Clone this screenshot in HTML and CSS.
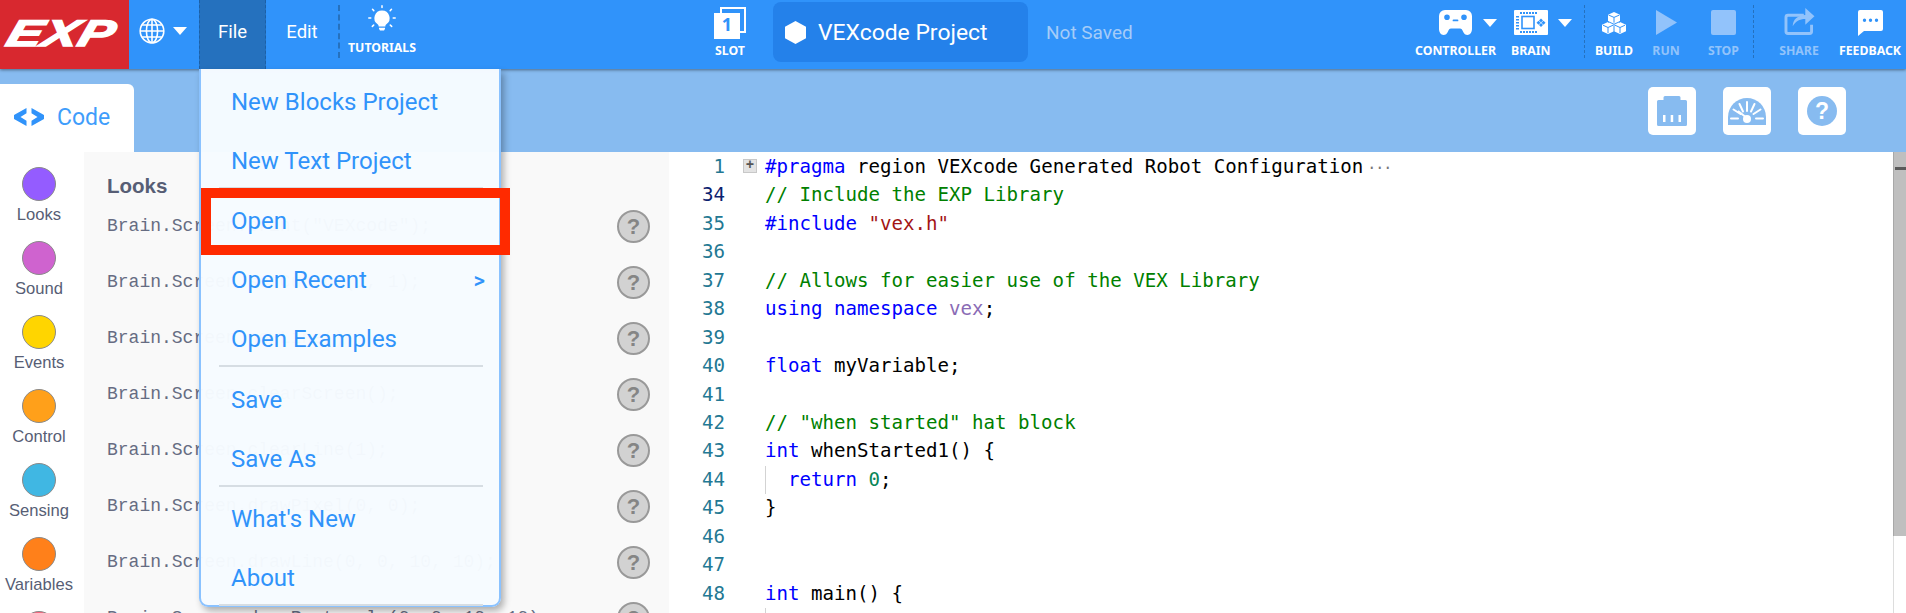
FILE: index.html
```html
<!DOCTYPE html>
<html lang="en">
<head>
<meta charset="utf-8">
<title>VEXcode EXP</title>
<link rel="stylesheet" href="styles.css">
</head>
<body>
<div class="app">
  <header class="topbar">
    <div class="logo"><span class="logo-text">EXP</span></div>
    <div class="globe">
      <svg class="globe-icon" viewBox="0 0 26 26"><g fill="none" stroke="#fff" stroke-width="1.6"><circle cx="13" cy="13" r="11.8"/><ellipse cx="13" cy="13" rx="5.6" ry="11.8"/><path d="M13 1v24M1.5 13h23M3.2 7h19.6M3.2 19h19.6"/></g></svg>
      <svg class="caret" viewBox="0 0 14 8"><path d="M0 0h14L7 8z" fill="#fff"/></svg>
    </div>
    <div class="nav nav-file">File</div>
    <div class="nav nav-edit">Edit</div>
    <div class="vr"></div>
    <div class="tutorials">
      <svg class="bulb" viewBox="0 0 28 28"><g fill="#fff"><path d="M14 5.500a7.600 7.600 0 0 0-4.400 13.800c.9.700 1 1.400 1 2.200h6.800c0-.8.100-1.500 1-2.200A7.600 7.600 0 0 0 14 5.500z"/><path d="M11 22.700h6v1.100l-1 1.600h-4l-1-1.600z"/></g><g stroke="#fff" stroke-width="1.500" stroke-linecap="round"><path d="M14 .8v1.700M4.500 4.300l1.300 1.300M23.500 4.300l-1.300 1.300M.8 13h2M25.200 13h2M4.300 21.400l1.400-1.300M23.700 21.400l-1.400-1.300"/></g></svg>
      <span class="tool-label">TUTORIALS</span>
    </div>
    <div class="tool slot">
      <div class="slot-icon"><span class="slot-back"></span><span class="slot-front">1</span></div>
      <span class="tool-label">SLOT</span>
    </div>
    <div class="project">
      <svg class="hex" viewBox="0 0 21 23"><path d="M10.500 0l10.500 5.750v11.500L10.500 23 0 17.250V5.750z" fill="#fff"/></svg>
      <span class="project-name">VEXcode Project</span>
    </div>
    <div class="saved">Not Saved</div>
    <div class="tools">
      <div class="tool tool-controller">
        <div class="tool-row">
          <svg class="ic ic-controller" viewBox="0 0 33 25"><path fill="#fff" fill-rule="evenodd" d="M6 0h21a6 6 0 0 1 6 6v13c0 3-2 6-4.500 6-2 0-3.500-1-4.500-3.500-.8-2-1.500-3-3-3H12c-1.500 0-2.200 1-3 3C8 24 6.500 25 4.500 25 2 25 0 22 0 19V6a6 6 0 0 1 6-6zM8 4.500a2.800 2.800 0 1 0 0 5.600 2.800 2.800 0 0 0 0-5.600zm17 0a2.800 2.800 0 1 0 0 5.600 2.800 2.800 0 0 0 0-5.600zM14.500 9.500a.8.8 0 0 0 0 1.800h4a.8.8 0 0 0 0-1.800z"/></svg>
          <svg class="caret" viewBox="0 0 14 8"><path d="M0 0h14L7 8z" fill="#fff"/></svg>
        </div>
        <span class="tool-label">CONTROLLER</span>
      </div>
      <div class="tool tool-brain">
        <div class="tool-row">
          <svg class="ic ic-brain" viewBox="0 0 34 25"><path fill="#fff" d="M1 0h32a1 1 0 0 1 1 1v23a1 1 0 0 1-1 1H1a1 1 0 0 1-1-1V1a1 1 0 0 1 1-1z"/><rect x="8" y="6.500" width="12" height="12" fill="none" stroke="#3093fa" stroke-width="1.600"/><g fill="#3093fa"><path d="M6 2h2v2H6zM9 2h2v2H9zM12 2h2v2h-2zM15 2h2v2h-2zM18 2h2v2h-2zM21 2h2v2h-2zM6 21h2v2H6zM9 21h2v2H9zM12 21h2v2h-2zM15 21h2v2h-2zM18 21h2v2h-2zM21 21h2v2h-2zM2 6h3v1.500H2zM2 9h3v1.500H2zM2 12h3v1.500H2zM2 15h3v1.500H2zM2 18h3v1.500H2z"/><path d="M27 8.500l2 2-2 2-2-2zM27 13l2 2-2 2-2-2zM24.500 10.800l2 2-2 2-2-2zM29.500 10.800l2 2-2 2-2-2z"/></g></svg>
          <svg class="caret" viewBox="0 0 14 8"><path d="M0 0h14L7 8z" fill="#fff"/></svg>
        </div>
        <span class="tool-label">BRAIN</span>
      </div>
      <div class="vr-thin"></div>
      <div class="tool tool-build">
        <svg class="ic ic-build" viewBox="0 0 24 22"><g fill="#fff"><path d="M12 0l6 2.700v6.300l-6 2.700-6-2.700V2.700z"/><path d="M6 10l6 2.700v6.600L6 22l-6-2.700v-6.600z"/><path d="M18 10l6 2.700v6.600L18 22l-6-2.700v-6.600z"/></g><g fill="none" stroke="#3093fa" stroke-width="1"><path d="M6.500 3L12 5.400 17.500 3M12 5.400v5.300M1 13.200l5 2.300 5-2.300M6 15.500v5.500M13 13.200l5 2.300 5-2.300M18 15.500v5.500M12 12.400v7.400M7 10l-1 .2M17 10l1 .2"/></g></svg>
        <span class="tool-label">BUILD</span>
      </div>
      <div class="tool tool-run off">
        <svg class="ic ic-run" viewBox="0 0 21 25"><path d="M0 0l21 12.500L0 25z" fill="#92c3fb"/></svg>
        <span class="tool-label">RUN</span>
      </div>
      <div class="tool tool-stop off">
        <div class="ic-stop"></div>
        <span class="tool-label">STOP</span>
      </div>
      <div class="vr-thin vr-second"></div>
      <div class="tool tool-share off">
        <svg class="ic ic-share" viewBox="0 0 31 29"><g fill="none" stroke="#92c3fb" stroke-width="3"><path d="M20 8.500H3.500a2 2 0 0 0-2 2v15a2 2 0 0 0 2 2H26a2 2 0 0 0 2-2v-7"/></g><path d="M8.500 20c0-7 5-11.500 13-11.700V1L31 9.700l-9.500 8.800v-6c-6 0-10 2.500-13 7.500z" fill="#92c3fb"/></svg>
        <span class="tool-label">SHARE</span>
      </div>
      <div class="tool tool-feedback">
        <svg class="ic ic-feedback" viewBox="0 0 25 26"><path fill="#fff" fill-rule="evenodd" d="M2 0h21a2 2 0 0 1 2 2v17a2 2 0 0 1-2 2H6l-6 5V2a2 2 0 0 1 2-2zm4.500 8.500a1.700 1.700 0 1 0 0 3.400 1.700 1.700 0 0 0 0-3.400zm6 0a1.700 1.700 0 1 0 0 3.400 1.700 1.700 0 0 0 0-3.400zm6 0a1.700 1.700 0 1 0 0 3.400 1.700 1.700 0 0 0 0-3.400z"/></svg>
        <span class="tool-label">FEEDBACK</span>
      </div>
    </div>
  </header>

  <div class="subbar">
    <div class="tab">
      <svg class="tab-icon" viewBox="0 0 30 18"><path d="M12.500 0v5.200L6.500 9l6 3.800V18L0 11V7zM17.500 0v5.200l6 3.800-6 3.800V18L30 11V7z" fill="#3093fa"/></svg>
      <span class="tab-label">Code</span>
    </div>
    <div class="side-buttons">
      <div class="side-btn">
        <svg viewBox="0 0 30 30"><path d="M8 0h14a1.500 1.500 0 0 1 1.500 1.500V4h5A1.500 1.500 0 0 1 30 5.500v23a1.500 1.500 0 0 1-1.500 1.500h-27A1.500 1.500 0 0 1 0 28.500v-23A1.500 1.500 0 0 1 1.500 4h5V1.500A1.500 1.500 0 0 1 8 0z" fill="#87bbf0"/><path d="M6 19h2.500v7H6zM13.700 19h2.500v7h-2.500zM21.500 19H24v7h-2.500z" fill="#fff"/></svg>
      </div>
      <div class="side-btn">
        <svg viewBox="0 0 38 28"><path d="M19 0a19 19 0 0 1 19 19v8H0v-8A19 19 0 0 1 19 0z" fill="#87bbf0"/><g stroke="#fff" stroke-width="2" stroke-linecap="round"><path d="M19 4v9M11.500 6l3.500 7.500M26.500 6L23 13.500M5.500 11.500l7 4.500M32.500 11.500l-7 4.500M3 20.500h7M28 20.500h7"/></g><path d="M10 13l7 5.500" stroke="#fff" stroke-width="2"/><circle cx="19" cy="21" r="4" fill="#fff"/></svg>
      </div>
      <div class="side-btn side-help"><span class="help-mark">?</span></div>
    </div>
  </div>

  <main class="main">
    <nav class="cats">
      <div class="cat"><span class="dot dot-looks"></span><span class="cat-label">Looks</span></div>
      <div class="cat"><span class="dot dot-sound"></span><span class="cat-label">Sound</span></div>
      <div class="cat"><span class="dot dot-events"></span><span class="cat-label">Events</span></div>
      <div class="cat"><span class="dot dot-control"></span><span class="cat-label">Control</span></div>
      <div class="cat"><span class="dot dot-sensing"></span><span class="cat-label">Sensing</span></div>
      <div class="cat"><span class="dot dot-variables"></span><span class="cat-label">Variables</span></div>
      <div class="cat"><span class="dot dot-operators"></span><span class="cat-label">Operators</span></div>
    </nav>

    <section class="blocks">
      <h2 class="blocks-title">Looks</h2>
      <div class="block"><code>Brain.Screen.print("VEXcode");</code><span class="q">?</span></div>
      <div class="block"><code>Brain.Screen.setCursor(1, 1);</code><span class="q">?</span></div>
      <div class="block"><code>Brain.Screen.newLine();</code><span class="q">?</span></div>
      <div class="block"><code>Brain.Screen.clearScreen();</code><span class="q">?</span></div>
      <div class="block"><code>Brain.Screen.clearLine(1);</code><span class="q">?</span></div>
      <div class="block"><code>Brain.Screen.drawPixel(0, 0);</code><span class="q">?</span></div>
      <div class="block"><code>Brain.Screen.drawLine(0, 0, 10, 10);</code><span class="q">?</span></div>
      <div class="block"><code>Brain.Screen.drawRectangle(0, 0, 10, 10);</code><span class="q">?</span></div>
    </section>

    <section class="editor">
      <div class="code">
        <div class="line"><span class="num">1</span><span class="fold"><span class="fold-box">+</span></span><span class="src"><span class="kw">#pragma</span> region VEXcode Generated Robot Configuration<span class="more">···</span></span></div>
        <div class="line"><span class="num num-active">34</span><span class="fold"></span><span class="src cm">// Include the EXP Library</span></div>
        <div class="line"><span class="num">35</span><span class="fold"></span><span class="src"><span class="kw">#include</span> <span class="str">"vex.h"</span></span></div>
        <div class="line"><span class="num">36</span><span class="fold"></span><span class="src"></span></div>
        <div class="line"><span class="num">37</span><span class="fold"></span><span class="src cm">// Allows for easier use of the VEX Library</span></div>
        <div class="line"><span class="num">38</span><span class="fold"></span><span class="src"><span class="kw">using</span> <span class="kw">namespace</span> <span class="ns">vex</span>;</span></div>
        <div class="line"><span class="num">39</span><span class="fold"></span><span class="src"></span></div>
        <div class="line"><span class="num">40</span><span class="fold"></span><span class="src"><span class="kw">float</span> myVariable;</span></div>
        <div class="line"><span class="num">41</span><span class="fold"></span><span class="src"></span></div>
        <div class="line"><span class="num">42</span><span class="fold"></span><span class="src cm">// "when started" hat block</span></div>
        <div class="line"><span class="num">43</span><span class="fold"></span><span class="src"><span class="kw">int</span> whenStarted1() {</span></div>
        <div class="line"><span class="num">44</span><span class="fold"></span><span class="src"><span class="indent"></span><span class="kw">return</span> <span class="lit">0</span>;</span></div>
        <div class="line"><span class="num">45</span><span class="fold"></span><span class="src">}</span></div>
        <div class="line"><span class="num">46</span><span class="fold"></span><span class="src"></span></div>
        <div class="line"><span class="num">47</span><span class="fold"></span><span class="src"></span></div>
        <div class="line"><span class="num">48</span><span class="fold"></span><span class="src"><span class="kw">int</span> main() {</span></div>
        <div class="line"><span class="num">49</span><span class="fold"></span><span class="src"><span class="indent"></span></span></div>
      </div>
      <div class="vscroll"><div class="thumb"><span class="thumb-mark"></span></div></div>
    </section>
  </main>

  <div class="file-menu">
    <div class="menu-item">New Blocks Project</div>
    <div class="menu-item">New Text Project</div>
    <div class="menu-sep"></div>
    <div class="menu-item">Open</div>
    <div class="menu-item"><span>Open Recent</span><span class="menu-arrow">&gt;</span></div>
    <div class="menu-item">Open Examples</div>
    <div class="menu-sep"></div>
    <div class="menu-item">Save</div>
    <div class="menu-item">Save As</div>
    <div class="menu-sep"></div>
    <div class="menu-item">What's New</div>
    <div class="menu-item">About</div>
    <div class="menu-sep menu-sep-last"></div>
  </div>
  <div class="highlight"></div>
</div>
</body>
</html>
```
FILE: styles.css
```css
* { box-sizing: border-box; }
html, body { margin: 0; height: 100%; overflow: hidden; background: #fff; }
.app { position: relative; height: 613px; width: 1906px; overflow: hidden; display: flex; flex-direction: column; font-family: "Roboto", sans-serif; }

/* top bar */
.topbar { height: 69px; flex: none; display: flex; background: #3093fa; color: #fff; position: relative; z-index: 2; box-shadow: 0 1px 3px rgba(0,0,0,.45); }
.logo { width: 129px; background: #d8282f; display: flex; align-items: center; justify-content: center; overflow: hidden; }
.logo-text { font: italic bold 37px/1 "Liberation Sans", sans-serif; color: #fff; -webkit-text-stroke: 1.6px #fff; transform: scaleX(1.42) skewX(-12deg); letter-spacing: .5px; margin-top: -2px; margin-left: -6px; }
.globe { width: 70px; display: flex; align-items: center; padding: 0 0 7px 10px; gap: 8px; }
.globe-icon { width: 26px; height: 26px; }
.caret { width: 14px; height: 8px; flex: none; }
.nav { display: flex; align-items: center; justify-content: center; font-size: 18.5px; padding-bottom: 5px; }
.nav-file { width: 67px; background: #2571be; border-left: 1px dashed #1c5fa5; border-right: 1px dashed #1c5fa5; }
.nav-edit { width: 72px; }
.vr { width: 2px; height: 53px; margin-top: 5px; border-left: 2px dashed #2571be; }
.tutorials { width: 84px; display: flex; flex-direction: column; align-items: center; padding-top: 5px; }
.bulb { width: 28px; height: 28px; }
.tool-label { font: bold 12.3px/14px "Noto Sans", sans-serif; white-space: nowrap; }
.tutorials .tool-label { margin-top: 8px; }
.tool { display: flex; flex-direction: column; align-items: center; padding-top: 10px; }
.tool .tool-label { position: relative; margin-top: auto; margin-bottom: 11px; }
.slot { width: 60px; margin-left: 276px; padding-top: 7px; }
.slot-icon { position: relative; width: 32px; height: 32px; }
.slot-back { position: absolute; right: 0; top: 0; width: 26px; height: 26px; border: 2px solid #fff; }
.slot-front { position: absolute; left: 0; bottom: 0; width: 26px; height: 26px; background: #fff; color: #3093fa; font: bold 18px/23px "Noto Sans", sans-serif; text-align: center; }
.project { width: 255px; height: 60px; margin: 2px 0 0 13px; background: #2481ea; border-radius: 8px; display: flex; align-items: center; padding-left: 12px; }
.hex { width: 21px; height: 23px; }
.project-name { font-size: 22.9px; margin-left: 12px; }
.saved { margin: 0 0 0 18px; font-size: 19px; color: #a5ccf8; align-self: center; padding-bottom: 5px; }
.tools { margin-left: auto; padding-right: 5px; display: flex; }
.tool-row { display: flex; align-self: flex-start; align-items: flex-start; }
.ic-controller { width: 33px; height: 25px; margin-left: 24px; }
.ic-brain { width: 34px; height: 25px; margin-left: 3px; }
.tool-row .caret { margin-top: 9px; }
.tool-controller { width: 82px; align-items: flex-start; }
.tool-controller .caret { margin-left: 11px; }
.tool-brain { width: 61px; margin-left: 14px; align-items: flex-start; }
.tool-brain .caret { margin-left: 10px; }
.vr-thin { width: 1px; height: 53px; margin: 5px 0 0 12px; border-left: 1px dashed #2571be; }
.tool-build { width: 38px; margin-left: 10px; padding-top: 12px; }
.ic-build { width: 24px; height: 22px; }
.tool-run { width: 26px; margin-left: 20px; }
.ic-run { width: 21px; height: 25px; }
.tool-stop { width: 31px; margin-left: 29px; }
.ic-stop { width: 25px; height: 25px; background: #92c3fb; border-radius: 2px; }
.vr-second { margin-left: 14px; }
.tool-share { width: 40px; margin-left: 25px; padding-top: 7px; }
.ic-share { width: 31px; height: 28px; }
.tool-feedback { width: 62px; margin-left: 20px; }
.ic-feedback { width: 25px; height: 26px; }
.off .tool-label { color: #92c3fb; }

/* sub bar */
.subbar { height: 83px; flex: none; background: #87bbf0; display: flex; align-items: flex-end; justify-content: space-between; }
.tab { width: 134px; height: 68px; background: #fff; border-top-right-radius: 6px; display: flex; align-items: center; padding: 0 0 2px 14px; }
.tab-icon { width: 30px; height: 18px; }
.tab-label { margin-left: 13px; font-size: 23px; color: #3f9dfb; }
.side-buttons { display: flex; gap: 27px; padding: 0 60px 17px 0; }
.side-btn { width: 48px; height: 48px; background: #fff; border-radius: 5px; display: flex; align-items: center; justify-content: center; }
.side-btn svg { width: 30px; height: 30px; }
.side-btn:nth-child(2) svg { width: 38px; height: 28px; margin-top: 2px; }
.help-mark { width: 30px; height: 30px; border-radius: 50%; background: #87bbf0; color: #fff; font: bold 23px/30px "Liberation Sans", sans-serif; text-align: center; }

/* main */
.main { flex: 1; min-height: 0; display: flex; }
.cats { width: 84px; flex: none; padding: 15px 6px 0 0; background: #fff; }
.cat { height: 74px; display: flex; flex-direction: column; align-items: center; }
.dot { width: 34px; height: 34px; border-radius: 50%; border: 1px solid #8a8a8a; flex: none; }
.dot-looks { background: #945cff; }
.dot-sound { background: #cf63cf; }
.dot-events { background: #ffd500; }
.dot-control { background: #ffa01a; }
.dot-sensing { background: #40b7e3; }
.dot-variables { background: #ff801a; }
.dot-operators { background: #ff6680; }
.cat-label { margin-top: 5px; font: 16.6px/18px "Liberation Sans", sans-serif; color: #575e75; white-space: nowrap; }
.blocks { width: 585px; flex: none; background: #f9f9f9; padding: 22px 19px 0 23px; overflow: hidden; }
.blocks-title { margin: 0; font: bold 20.5px/24px "Liberation Sans", sans-serif; color: #575e75; }
.block { height: 56px; display: flex; align-items: center; justify-content: space-between; }
.block code { font: 18px/24px "Liberation Mono", monospace; color: #666c82; white-space: nowrap; }
.q { width: 33px; height: 33px; border-radius: 50%; background: #d2d2d2; border: 2px solid #999; color: #858585; font: bold 22px/29px "Liberation Sans", sans-serif; text-align: center; flex: none; }

/* editor */
.editor { flex: 1; min-width: 0; display: flex; background: #fff; }
.code { flex: 1; min-width: 0; padding-top: 1px; font: 19.13px/28.44px "DejaVu Sans Mono", monospace; overflow: hidden; color: #000; }
.line { height: 28.44px; display: flex; white-space: pre; }
.num { width: 56px; flex: none; text-align: right; color: #237893; }
.num-active { color: #0b216f; }
.fold { width: 40px; flex: none; display: flex; align-items: center; padding-left: 18px; }
.fold-box { width: 14px; height: 14px; background: #e3e3e3; border: 1px solid #c8c8c8; color: #555; font: bold 14px/11px "Liberation Mono", monospace; text-align: center; margin-top: -2px; }
.src { flex: 1; }
.kw { color: #0000ff; }
.cm { color: #008000; }
.str { color: #a31515; }
.ns { color: #8a6bb5; }
.lit { color: #098658; }
.more { color: #777; font-size: 15px; margin-left: 4px; letter-spacing: -1px; }
.indent { display: inline-block; width: 23px; height: 28.44px; vertical-align: top; border-left: 1px solid #d3d3d3; }
.vscroll { width: 13px; flex: none; border-left: 1px solid #ddd; }
.thumb { position: relative; height: 384px; background: #bfbfbf; margin-left: -1px; border-left: 1px solid #a8a8a8; }
.thumb-mark { position: absolute; left: 1px; right: 0; top: 15px; height: 3px; background: #5a5a5a; }

/* file menu */
.file-menu { position: absolute; z-index: 3; left: 199px; top: 69px; width: 302px; height: 538px; background: rgba(246,251,255,.975); border: 2px solid #8ac2ff; border-top: 0; border-radius: 0 0 9px 9px; box-shadow: 3px 4px 7px rgba(0,0,0,.3); color: #3093fa; font-size: 24px; }
.menu-item { height: 58.8px; padding: 7px 14px 0 30px; display: flex; align-items: center; justify-content: space-between; }
.menu-sep { height: 2px; margin: 0 16px 0 18px; background: #d6dde3; }
.menu-arrow { font-size: 22px; font-weight: 500; }
.highlight { position: absolute; z-index: 4; left: 201px; top: 188px; width: 309px; height: 67px; border: 10px solid #ff2a00; }
```
